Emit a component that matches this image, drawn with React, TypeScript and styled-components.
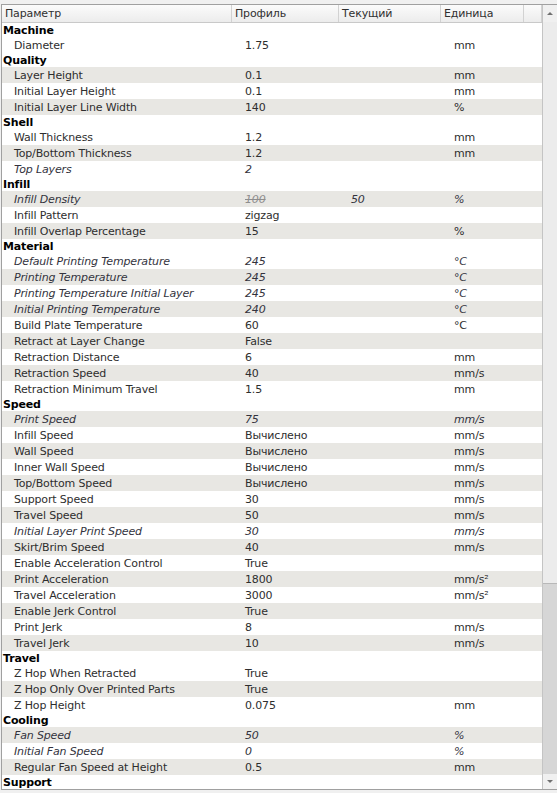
import styled, { createGlobalStyle } from "styled-components";

type Setting = {
  name: string;
  value?: string;
  current?: string;
  unit?: string;
  italic?: boolean;
  overridden?: boolean;
};

type Category = {
  title: string;
  settings: Setting[];
};

const categories: Category[] = [
  {
    title: "Machine",
    settings: [{ name: "Diameter", value: "1.75", unit: "mm" }],
  },
  {
    title: "Quality",
    settings: [
      { name: "Layer Height", value: "0.1", unit: "mm" },
      { name: "Initial Layer Height", value: "0.1", unit: "mm" },
      { name: "Initial Layer Line Width", value: "140", unit: "%" },
    ],
  },
  {
    title: "Shell",
    settings: [
      { name: "Wall Thickness", value: "1.2", unit: "mm" },
      { name: "Top/Bottom Thickness", value: "1.2", unit: "mm" },
      { name: "Top Layers", value: "2", italic: true },
    ],
  },
  {
    title: "Infill",
    settings: [
      { name: "Infill Density", value: "100", current: "50", unit: "%", italic: true, overridden: true },
      { name: "Infill Pattern", value: "zigzag" },
      { name: "Infill Overlap Percentage", value: "15", unit: "%" },
    ],
  },
  {
    title: "Material",
    settings: [
      { name: "Default Printing Temperature", value: "245", unit: "°C", italic: true },
      { name: "Printing Temperature", value: "245", unit: "°C", italic: true },
      { name: "Printing Temperature Initial Layer", value: "245", unit: "°C", italic: true },
      { name: "Initial Printing Temperature", value: "240", unit: "°C", italic: true },
      { name: "Build Plate Temperature", value: "60", unit: "°C" },
      { name: "Retract at Layer Change", value: "False" },
      { name: "Retraction Distance", value: "6", unit: "mm" },
      { name: "Retraction Speed", value: "40", unit: "mm/s" },
      { name: "Retraction Minimum Travel", value: "1.5", unit: "mm" },
    ],
  },
  {
    title: "Speed",
    settings: [
      { name: "Print Speed", value: "75", unit: "mm/s", italic: true },
      { name: "Infill Speed", value: "Вычислено", unit: "mm/s" },
      { name: "Wall Speed", value: "Вычислено", unit: "mm/s" },
      { name: "Inner Wall Speed", value: "Вычислено", unit: "mm/s" },
      { name: "Top/Bottom Speed", value: "Вычислено", unit: "mm/s" },
      { name: "Support Speed", value: "30", unit: "mm/s" },
      { name: "Travel Speed", value: "50", unit: "mm/s" },
      { name: "Initial Layer Print Speed", value: "30", unit: "mm/s", italic: true },
      { name: "Skirt/Brim Speed", value: "40", unit: "mm/s" },
      { name: "Enable Acceleration Control", value: "True" },
      { name: "Print Acceleration", value: "1800", unit: "mm/s²" },
      { name: "Travel Acceleration", value: "3000", unit: "mm/s²" },
      { name: "Enable Jerk Control", value: "True" },
      { name: "Print Jerk", value: "8", unit: "mm/s" },
      { name: "Travel Jerk", value: "10", unit: "mm/s" },
    ],
  },
  {
    title: "Travel",
    settings: [
      { name: "Z Hop When Retracted", value: "True" },
      { name: "Z Hop Only Over Printed Parts", value: "True" },
      { name: "Z Hop Height", value: "0.075", unit: "mm" },
    ],
  },
  {
    title: "Cooling",
    settings: [
      { name: "Fan Speed", value: "50", unit: "%", italic: true },
      { name: "Initial Fan Speed", value: "0", unit: "%", italic: true },
      { name: "Regular Fan Speed at Height", value: "0.5", unit: "mm" },
    ],
  },
  { title: "Support", settings: [] },
];

const columns = ["Параметр", "Профиль", "Текущий", "Единица", ""];

export default function App() {
  // setting rows alternate their background, category rows stay plain
  let index = 0;

  return (
    <>
      <GlobalStyle />
      <Window>
        <Panel>
          <TreeArea>
            <HeaderBar>
              {columns.map((col, i) => (
                <HeaderCell key={i}>{col}</HeaderCell>
              ))}
            </HeaderBar>
            {categories.map((cat) => (
              <div key={cat.title}>
                <CategoryRow>{cat.title}</CategoryRow>
                {cat.settings.map((s) => {
                  const alt = index++ % 2 === 1;
                  return (
                    <SettingRow key={s.name} $alt={alt} $italic={!!s.italic}>
                      <Cell $pad={12}>{s.name}</Cell>
                      <Cell $pad={13}>
                        {s.overridden ? <Struck>{s.value}</Struck> : s.value}
                      </Cell>
                      <Cell $pad={12}>{s.current}</Cell>
                      <Cell $pad={13}>{s.unit}</Cell>
                    </SettingRow>
                  );
                })}
              </div>
            ))}
          </TreeArea>
          <ScrollBar>
            <ArrowButton $height={17}>
              <Arrow $up />
            </ArrowButton>
            <Trough>
              <Thumb />
            </Trough>
            <ArrowButton $height={15}>
              <Arrow />
            </ArrowButton>
          </ScrollBar>
        </Panel>
      </Window>
    </>
  );
}

const GlobalStyle = createGlobalStyle`
  html, body {
    margin: 0;
    background: #f0f0f0;
  }
  body {
    font-family: "DejaVu Sans", Verdana, sans-serif;
    font-size: 11px;
    letter-spacing: -0.15px;
    color: #2e2e2e;
  }
`;

const Window = styled.div`
  width: 557px;
  height: 793px;
  padding: 4px 0 0 1px;
  box-sizing: border-box;
  overflow: hidden;
`;

const Panel = styled.div`
  display: flex;
  width: 556px;
  box-sizing: border-box;
  border: 1px solid #a0a0a0;
  border-right: none;
  background: #ffffff;
`;

const TreeArea = styled.div`
  width: 540px;
  display: flex;
  flex-direction: column;
`;

const HeaderBar = styled.div`
  display: grid;
  grid-template-columns: 230px 107px 102px 83px 18px;
  height: 18px;
  box-sizing: border-box;
  border-bottom: 1px solid #c9c9c9;
  background: linear-gradient(#fbfbfb, #ececec);
`;

const HeaderCell = styled.div`
  padding: 1px 0 0 3px;
  line-height: 16px;
  color: #303030;
  border-right: 1px solid #d2d2d2;
  white-space: nowrap;
  overflow: hidden;
`;

const CategoryRow = styled.div`
  height: 14px;
  box-sizing: border-box;
  padding: 1px 0 0 1px;
  line-height: 14px;
  overflow: hidden;
  font-weight: bold;
  color: #000000;
`;

const SettingRow = styled.div<{ $alt: boolean; $italic: boolean }>`
  display: grid;
  grid-template-columns: 230px 107px 102px 101px;
  height: 16px;
  box-sizing: border-box;
  padding-top: 1px;
  line-height: 15px;
  background: ${(p) => (p.$alt ? "#e8e7e3" : "#ffffff")};
  font-style: ${(p) => (p.$italic ? "italic" : "normal")};
  color: ${(p) => (p.$italic ? "#33333d" : "#2e2e2e")};
`;

const Cell = styled.div<{ $pad: number }>`
  padding-left: ${(p) => p.$pad}px;
  white-space: nowrap;
  overflow: hidden;
`;

const Struck = styled.span`
  color: #8e8e8e;
  text-decoration: line-through;
`;

const ScrollBar = styled.div`
  width: 15px;
  display: flex;
  flex-direction: column;
  box-sizing: border-box;
  border-left: 1px solid #c4c4c4;
  background: #f0f0f0;
`;

const ArrowButton = styled.div<{ $height: number }>`
  height: ${(p) => p.$height}px;
  flex: none;
  display: flex;
  align-items: center;
  justify-content: center;
  background: #f0f0f0;
`;

const Arrow = styled.div<{ $up?: boolean }>`
  width: 0;
  height: 0;
  border-left: 3px solid transparent;
  border-right: 3px solid transparent;
  ${(p) =>
    p.$up ? "border-bottom: 3px solid #707070;" : "border-top: 3px solid #707070;"}
`;

const Trough = styled.div`
  flex: 1;
  background: #d6d6d6;
`;

const Thumb = styled.div`
  height: 562px;
  box-sizing: border-box;
  background: #ececec;
  border-bottom: 1px solid #b8b8b8;
`;
